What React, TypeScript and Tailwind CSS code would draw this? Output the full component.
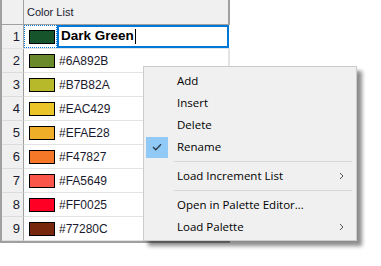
const rows = [
    { n: 2, hex: "#6A892B" },
    { n: 3, hex: "#B7B82A" },
    { n: 4, hex: "#EAC429" },
    { n: 5, hex: "#EFAE28" },
    { n: 6, hex: "#F47827" },
    { n: 7, hex: "#FA5649" },
    { n: 8, hex: "#FF0025" },
    { n: 9, hex: "#77280C" },
];

const Chevron = () => (
    <svg width="5" height="8" viewBox="0 0 5 8" className="absolute right-[12px] top-1/2 -translate-y-1/2">
        <path d="M1 1 L4 4 L1 7" fill="none" stroke="#555" strokeWidth="1" />
    </svg>
);

const MenuItem = ({ label, checked, sub }: { label: string; checked?: boolean; sub?: boolean }) => (
    <div className="relative flex items-center h-[22px]">
        <div className="w-[22px] h-[22px] ml-[2px] flex items-center justify-center">
            {checked && (
                <div className="w-[22px] h-[21px] bg-[#91c9f7] flex items-center justify-center">
                    <svg width="10" height="8" viewBox="0 0 10 8">
                        <path d="M1 4 L3.8 6.8 L9 1.2" fill="none" stroke="#2b3a4a" strokeWidth="1.3" />
                    </svg>
                </div>
            )}
        </div>
        <span className="ml-[9px] text-black">{label}</span>
        {sub && <Chevron />}
    </div>
);

const Separator = () => <div className="ml-[30px] mr-[4px] my-[3px] h-px bg-[#d7d7d7]" />;

export default function App() {
    return (
        <div className="relative w-[381px] h-[266px] bg-white overflow-hidden">
            <div className="w-[230px] border-l-2 border-b-2 border-[#a0a0a0] text-[11px] text-[#1a1a2e]" style={{ fontFamily: '"Liberation Sans", Arial, sans-serif' }}>
                <div className="flex h-[25px] bg-[#f0f0f0] border-b border-[#a0a0a0]">
                    <div className="w-[22px] border-r border-[#a0a0a0]" />
                    <div className="flex-1 flex items-center pl-[3px] border-r-2 border-[#a0a0a0]">Color List</div>
                </div>
                <div className="flex h-[24px] border-b border-[#e3e3e3]">
                    <div className="w-[22px] bg-[#f0f0f0] border-r border-[#a0a0a0] flex items-center justify-end pr-[3px] text-[13px]">1</div>
                    <div className="w-[33px] border border-dotted border-[#0078d7] flex items-center pl-[4px]">
                        <div className="w-[26px] h-[14px] border border-black bg-[#16552b]" />
                    </div>
                    <div className="flex-1 flex items-center border-2 border-[#0078d7] pl-[2px] mr-px text-[13.5px] font-bold text-black">
                        Dark Green
                        <span className="w-px h-[15px] bg-black ml-px" />
                    </div>
                </div>
                {rows.map((r) => (
                    <div key={r.n} className="flex h-[24px]">
                        <div className="w-[22px] bg-[#f0f0f0] border-r border-b border-[#a0a0a0] border-b-[#dcdcdc] flex items-center justify-end pr-[3px] text-[13px]">{r.n}</div>
                        <div className="flex-1 flex items-center pl-[5px] border-b border-r-2 border-[#e3e3e3]">
                            <div className="w-[26px] h-[14px] border border-black" style={{ backgroundColor: r.hex }} />
                            <span className="ml-[4px] text-[12px]">{r.hex}</span>
                        </div>
                    </div>
                ))}
            </div>

            <div
                className="absolute left-[143px] top-[66px] w-[214px] h-[175px] bg-[#f0f0f0] border border-[#cccccc] shadow-[5px_5px_4px_rgba(0,0,0,0.45)] py-[3px] text-[11.5px]"
                style={{ fontFamily: '"Open Sans", "Noto Sans", sans-serif' }}
            >
                <MenuItem label="Add" />
                <MenuItem label="Insert" />
                <MenuItem label="Delete" />
                <MenuItem label="Rename" checked />
                <Separator />
                <MenuItem label="Load Increment List" sub />
                <Separator />
                <MenuItem label="Open in Palette Editor..." />
                <MenuItem label="Load Palette" sub />
            </div>
        </div>
    );
}
